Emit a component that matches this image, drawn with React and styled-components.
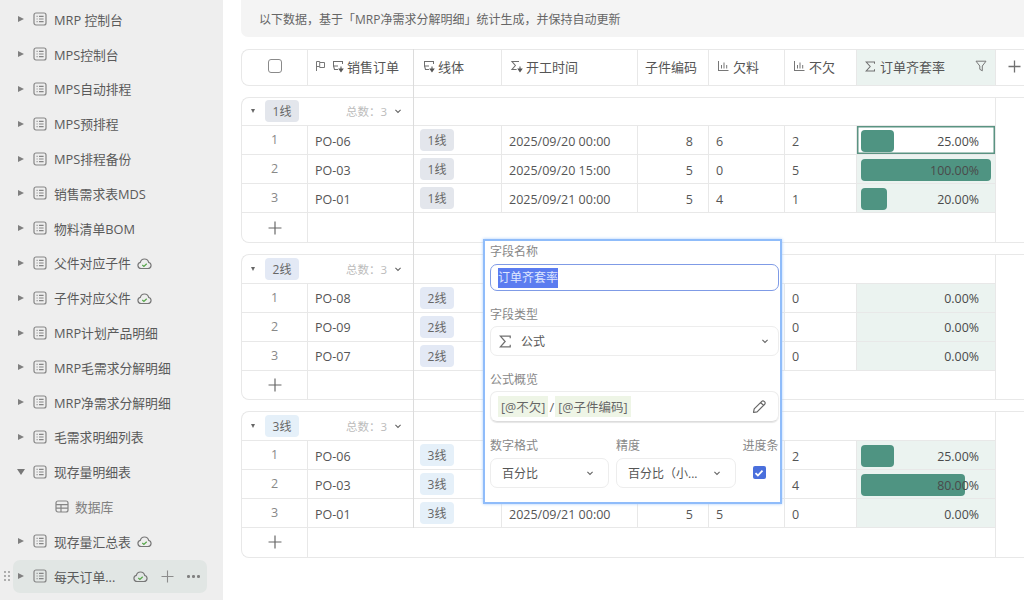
import styled, { createGlobalStyle } from "styled-components";

const COLUMNS = "66px 106px 88px 136px 71px 76px 72px 139px 29px";
const LINE = "#e8e8e8";

const NAV_ITEMS = [
  { name: "MRP 控制台" },
  { name: "MPS控制台" },
  { name: "MPS自动排程" },
  { name: "MPS预排程" },
  { name: "MPS排程备份" },
  { name: "销售需求表MDS" },
  { name: "物料清单BOM" },
  { name: "父件对应子件", cloud: true },
  { name: "子件对应父件", cloud: true },
  { name: "MRP计划产品明细" },
  { name: "MRP毛需求分解明细" },
  { name: "MRP净需求分解明细" },
  { name: "毛需求明细列表" },
  { name: "现存量明细表", open: true },
  { name: "数据库", child: true },
  { name: "现存量汇总表", cloud: true },
];

const GROUPS = [
  {
    label: "1线",
    tagBg: "#e3e6ec",
    rows: [
      { order: "PO-06", date: "2025/09/20 00:00", code: 8, short: 6, ok: 2, rate: 25, text: "25.00%", active: true },
      { order: "PO-03", date: "2025/09/20 15:00", code: 5, short: 0, ok: 5, rate: 100, text: "100.00%" },
      { order: "PO-01", date: "2025/09/21 00:00", code: 5, short: 4, ok: 1, rate: 20, text: "20.00%" },
    ],
  },
  {
    label: "2线",
    tagBg: "#e3e9f5",
    rows: [
      { order: "PO-08", ok: 0, rate: 0, text: "0.00%" },
      { order: "PO-09", ok: 0, rate: 0, text: "0.00%" },
      { order: "PO-07", ok: 0, rate: 0, text: "0.00%" },
    ],
  },
  {
    label: "3线",
    tagBg: "#e5f0f9",
    rows: [
      { order: "PO-06", ok: 2, rate: 25, text: "25.00%" },
      { order: "PO-03", ok: 4, rate: 80, text: "80.00%" },
      { order: "PO-01", date: "2025/09/21 00:00", code: 5, short: 5, ok: 0, rate: 0, text: "0.00%" },
    ],
  },
];

function DocIcon() {
  return (
    <svg width="14" height="14" viewBox="0 0 14 14" fill="none" stroke="#858585" strokeWidth="1.2">
      <rect x="1" y="1" width="12" height="12" rx="2" />
      <path d="M3.6 4.3h1M3.6 7h1M3.6 9.7h1M6 4.3h4.6M6 7h4.6M6 9.7h4.6" />
    </svg>
  );
}

function GridIcon() {
  return (
    <svg width="14" height="13" viewBox="0 0 14 13" fill="none" stroke="#858585" strokeWidth="1.2">
      <rect x="1" y="1" width="12" height="11" rx="2" />
      <path d="M1 4.6h12M1 8.2h12M6 4.6V12" />
    </svg>
  );
}

function CloudIcon() {
  return (
    <svg width="15" height="14" viewBox="0 0 15 14" fill="none">
      <path d="M4.2 12.5a3.1 3.1 0 0 1-.9-6.1 4.3 4.3 0 0 1 8.4 0 3.1 3.1 0 0 1-.9 6.1z" stroke="#777" strokeWidth="1.2" />
      <path d="M5.3 9l1.6 1.4 2.8-2.6" stroke="#55a548" strokeWidth="1.2" />
    </svg>
  );
}

function FlagIcon() {
  return (
    <svg width="11" height="12" viewBox="0 0 11 12" fill="none" stroke="#777" strokeWidth="1">
      <path d="M1.5 11V1.5h3.2v1h4.8v5H4.7v-1H1.5M4.7 2.5v4" />
    </svg>
  );
}

function LinkIcon() {
  return (
    <svg width="12" height="13" viewBox="0 0 12 13" fill="none" stroke="#6e6e6e" strokeWidth="1.05">
      <path d="M6 6H1.5V1.5h9v2.6M1.5 6l1 3.5h3.6" />
      <path d="M9 6.5v3.2M7.2 9h3.6L9 11.6z" fill="#555" stroke="#555" />
    </svg>
  );
}

function SigmaLinkIcon() {
  return (
    <svg width="12" height="13" viewBox="0 0 12 13" fill="none" stroke="#6e6e6e" strokeWidth="1.05">
      <path d="M8 1.5H1l3.4 4L1 9.5h4.6" />
      <path d="M9 6.5v3.2M7.2 9h3.6L9 11.6z" fill="#555" stroke="#555" />
    </svg>
  );
}

function SigmaIcon({ size = 11 }) {
  return (
    <svg width={size} height={size} viewBox="0 0 11 11" fill="none" stroke="#707070" strokeWidth="1.05">
      <path d="M9.5 2.8V1H1.2l4 4.5-4 4.5h8.3V8.2" />
    </svg>
  );
}

function BarsIcon() {
  return (
    <svg width="12" height="12" viewBox="0 0 12 12" fill="none" stroke="#777" strokeWidth="1">
      <path d="M1 10.5h10.5M1.5 1v9.5M4.5 5v3.5M7 2.5v6M9.7 5v3.5" />
    </svg>
  );
}

function FilterIcon() {
  return (
    <svg width="12" height="12" viewBox="0 0 12 12" fill="none" stroke="#777" strokeWidth="1">
      <path d="M1 1.2h10L7.3 6v4.8L4.8 9.3V6z" strokeLinejoin="round" />
    </svg>
  );
}

function PlusIcon({ size = 13, color = "#666", weight = 1.1 }) {
  return (
    <svg width={size} height={size} viewBox="0 0 13 13" fill="none" stroke={color} strokeWidth={weight}>
      <path d="M6.5 0.5v12M0.5 6.5h12" />
    </svg>
  );
}

function Chevron({ size = 8, color = "#666" }) {
  return (
    <svg width={size} height={size} viewBox="0 0 8 8" fill="none" stroke={color} strokeWidth="1.1">
      <path d="M1.4 2.8l2.6 2.6 2.6-2.6" />
    </svg>
  );
}

function PencilIcon() {
  return (
    <svg width="15" height="15" viewBox="0 0 15 15" fill="none" stroke="#666" strokeWidth="1.2" strokeLinejoin="round">
      <path d="M1.5 13.5l.7-3.6 7.6-7.6a1.6 1.6 0 0 1 2.3 0l.6.6a1.6 1.6 0 0 1 0 2.3l-7.6 7.6zM8.6 3.5l2.9 2.9" />
    </svg>
  );
}

function HandleIcon() {
  return (
    <svg width="6" height="10" viewBox="0 0 6 10" fill="#8c8c8c">
      <circle cx="1" cy="1" r="0.9" />
      <circle cx="5" cy="1" r="0.9" />
      <circle cx="1" cy="5" r="0.9" />
      <circle cx="5" cy="5" r="0.9" />
      <circle cx="1" cy="9" r="0.9" />
      <circle cx="5" cy="9" r="0.9" />
    </svg>
  );
}

function NavRow({ item }) {
  if (item.child) {
    return (
      <Row>
        <ChildSlot>
          <GridIcon />
        </ChildSlot>
        <ChildName>{item.name}</ChildName>
      </Row>
    );
  }
  return (
    <Row>
      <Caret $open={item.open} />
      <DocSlot>
        <DocIcon />
      </DocSlot>
      <RowName>{item.name}</RowName>
      {item.cloud && (
        <CloudSlot>
          <CloudIcon />
        </CloudSlot>
      )}
    </Row>
  );
}

function RateCell({ row }) {
  return (
    <RatePane $active={row.active}>
      {row.rate > 0 && <RateBar style={{ width: `${(row.rate / 100) * 130}px` }} />}
      <RateText>{row.text}</RateText>
    </RatePane>
  );
}

function Group({ group }) {
  return (
    <GroupBox>
      <GroupHead>
        <SmallCaret />
        <GroupTag $bg={group.tagBg}>{group.label}</GroupTag>
        <Total>总数：3</Total>
        <Chevron />
      </GroupHead>
      <BlankHead />
      <Gutter />
      {group.rows.map((row, i) => (
        <DataRow key={row.order}>
          <IndexCell>{i + 1}</IndexCell>
          <Cell>{row.order}</Cell>
          <TagCell>
            <LineTag $bg={group.tagBg}>{group.label}</LineTag>
          </TagCell>
          <Cell>{row.date}</Cell>
          <Cell $right>{row.code}</Cell>
          <Cell>{row.short}</Cell>
          <Cell>{row.ok}</Cell>
          <RateCell row={row} />
          <Gutter />
        </DataRow>
      ))}
      <AddCell>
        <PlusIcon size={14} />
      </AddCell>
      <Gutter />
      <AddRest />
      <Gutter />
    </GroupBox>
  );
}

export default function App() {
  return (
    <Page>
      <GlobalStyle />
      <Sidebar>
        {NAV_ITEMS.map((item) => (
          <NavRow key={item.name} item={item} />
        ))}
        <ActiveRow>
          <DragHandle>
            <HandleIcon />
          </DragHandle>
          <Caret />
          <DocSlot>
            <DocIcon />
          </DocSlot>
          <ActiveName>每天订单...</ActiveName>
          <RowActions>
            <CloudIcon />
            <PlusIcon color="#8c8c8c" />
            <MoreDots>
              <i />
              <i />
              <i />
            </MoreDots>
          </RowActions>
        </ActiveRow>
      </Sidebar>

      <Main>
        <Banner>以下数据，基于「MRP净需求分解明细」统计生成，并保持自动更新</Banner>
        <TableArea>
          <FrozenLine />
          <HeaderRow>
            <HeadCell $center>
              <CheckBox />
            </HeadCell>
            <HeadCell>
              <FlagIcon />
              <LinkGap>
                <LinkIcon />
              </LinkGap>
              销售订单
            </HeadCell>
            <HeadCell $pad={9}>
              <LinkIcon />
              线体
            </HeadCell>
            <HeadCell $pad={9}>
              <SigmaLinkIcon />
              开工时间
            </HeadCell>
            <HeadCell>子件编码</HeadCell>
            <HeadCell $pad={8} $gap={4}>
              <BarsIcon />
              欠料
            </HeadCell>
            <HeadCell $pad={8} $gap={4}>
              <BarsIcon />
              不欠
            </HeadCell>
            <RateHead>
              <SigmaIcon />
              <RateTitle>订单齐套率</RateTitle>
              <FilterIcon />
            </RateHead>
            <AddColumn>
              <PlusIcon weight={1.3} color="#707070" />
            </AddColumn>
          </HeaderRow>
          {GROUPS.map((group) => (
            <Group key={group.label} group={group} />
          ))}
        </TableArea>
      </Main>

      <FieldPopup>
        <FieldLabel>字段名称</FieldLabel>
        <NameInput>
          <Selected>订单齐套率</Selected>
        </NameInput>
        <FieldLabel $top={15}>字段类型</FieldLabel>
        <SelectBox>
          <SigmaIcon size={13} />
          <SelectText $left={9}>公式</SelectText>
          <Chevron size={8} />
        </SelectBox>
        <FieldLabel $top={15}>公式概览</FieldLabel>
        <FormulaBox>
          <FormulaTag>[@不欠]</FormulaTag>
          <Slash>/</Slash>
          <FormulaTag>[@子件编码]</FormulaTag>
          <PencilSlot>
            <PencilIcon />
          </PencilSlot>
        </FormulaBox>
        <FormatGrid>
          <div>
            <FieldLabel>数字格式</FieldLabel>
            <SelectBox $tight>
              <SelectText>百分比</SelectText>
              <Chevron size={8} />
            </SelectBox>
          </div>
          <div>
            <FieldLabel>精度</FieldLabel>
            <SelectBox $tight>
              <SelectText>百分比（小...</SelectText>
              <Chevron size={8} />
            </SelectBox>
          </div>
          <div>
            <FieldLabel>进度条</FieldLabel>
            <CheckSlot>
              <BlueCheck>
                <svg width="10" height="10" viewBox="0 0 10 10" fill="none" stroke="#fff" strokeWidth="1.8">
                  <path d="M1.5 5.2l2.4 2.3 4.6-4.8" />
                </svg>
              </BlueCheck>
            </CheckSlot>
          </div>
        </FormatGrid>
      </FieldPopup>
    </Page>
  );
}

const GlobalStyle = createGlobalStyle`
  html, body {
    margin: 0;
    padding: 0;
    height: 100%;
    overflow: hidden;
    background: #fff;
  }
  body {
    font-family: "Open Sans", "Noto Sans CJK SC", sans-serif;
    font-size: 13px;
    color: #555;
  }
`;

const Page = styled.div`
  position: relative;
  display: flex;
  width: 1024px;
  height: 600px;
  overflow: hidden;
`;

const Sidebar = styled.aside`
  width: 223px;
  flex-shrink: 0;
  box-sizing: border-box;
  padding: 2px 16px 0 13px;
  background: #eeeeee;
  font-size: 12.8px;
`;

const Row = styled.div`
  position: relative;
  display: flex;
  align-items: center;
  height: 34.8px;
  padding-left: 5px;
  color: #5a5a5a;
  white-space: nowrap;
`;

const ActiveRow = styled(Row)`
  height: 33px;
  margin-top: 1px;
  border-radius: 7px;
  background: #e1e6e4;
`;

const DragHandle = styled.span`
  position: absolute;
  left: -9px;
  top: 11px;
  display: flex;
`;

const Caret = styled.span`
  width: 0;
  height: 0;
  flex-shrink: 0;
  ${({ $open }) =>
    $open
      ? `
    margin: 0 -1px 0 -1px;
    border-left: 4px solid transparent;
    border-right: 4px solid transparent;
    border-top: 6px solid #777;
  `
      : `
    border-top: 3.5px solid transparent;
    border-bottom: 3.5px solid transparent;
    border-left: 6px solid #808080;
  `}
`;

const DocSlot = styled.span`
  display: flex;
  margin-left: 9px;
`;

const RowName = styled.span`
  margin-left: 7px;
`;

const ActiveName = styled(RowName)`
  width: 76px;
`;

const ChildSlot = styled.span`
  display: flex;
  margin-left: 37px;
`;

const ChildName = styled.span`
  margin-left: 6px;
  color: #808080;
`;

const CloudSlot = styled.span`
  display: flex;
  margin-left: 6px;
`;

const RowActions = styled.span`
  display: flex;
  align-items: center;
  gap: 13px;
  margin-left: 3px;
`;

const MoreDots = styled.span`
  display: flex;
  gap: 2.5px;
  i {
    width: 2.5px;
    height: 2.5px;
    border-radius: 50%;
    background: #808080;
  }
`;

const Main = styled.main`
  flex: 1;
  min-width: 0;
  padding-left: 18px;
`;

const Banner = styled.div`
  display: flex;
  align-items: center;
  height: 37px;
  padding-left: 18px;
  background: #f4f4f4;
  border-bottom-left-radius: 7px;
  font-size: 12px;
  color: #666;
`;

const TableArea = styled.div`
  position: relative;
  margin-top: 12px;
`;

const FrozenLine = styled.div`
  position: absolute;
  z-index: 2;
  left: 172px;
  top: 0;
  width: 1px;
  height: 479px;
  background: #dcdcdc;
`;

const HeaderRow = styled.div`
  display: grid;
  grid-template-columns: ${COLUMNS};
  height: 36.5px;
  box-sizing: border-box;
  border: 1px solid ${LINE};
  border-right: 0;
  border-radius: 8px 0 0 8px;
  overflow: hidden;
`;

const HeadCell = styled.div`
  display: flex;
  align-items: center;
  justify-content: ${({ $center }) => ($center ? "center" : "flex-start")};
  gap: ${({ $gap }) => $gap ?? 3}px;
  padding-left: ${({ $center, $pad }) => ($center ? 0 : $pad ?? 7)}px;
  padding-bottom: 2px;
  border-right: 1px solid ${LINE};
  color: #555;
  white-space: nowrap;
`;

const LinkGap = styled.span`
  display: flex;
  margin-left: 3px;
`;

const CheckBox = styled.span`
  width: 12px;
  height: 12px;
  border: 1px solid #8a8a8a;
  border-radius: 3px;
`;

const RateHead = styled.div`
  display: flex;
  align-items: center;
  padding: 0 8px 2px 8px;
  background: #ebf3f0;
  border-right: 1px solid ${LINE};
`;

const RateTitle = styled.span`
  flex: 1;
  margin-left: 4px;
`;

const AddColumn = styled.div`
  display: flex;
  align-items: center;
  justify-content: center;
  padding: 0 0 2px 7px;
`;

const GroupBox = styled.div`
  display: grid;
  grid-template-columns: ${COLUMNS};
  grid-auto-rows: 28.9px;
  margin-top: 11px;
  border: 1px solid ${LINE};
  border-right: 0;
  border-radius: 8px 0 0 8px;
  overflow: hidden;
`;

const GroupHead = styled.div`
  grid-column: span 2;
  display: flex;
  align-items: center;
  padding: 0 12px 0 9px;
  border-bottom: 1px solid ${LINE};
`;

const SmallCaret = styled.span`
  width: 0;
  height: 0;
  border-left: 2.5px solid transparent;
  border-right: 2.5px solid transparent;
  border-top: 4px solid #666;
`;

const GroupTag = styled.span`
  display: flex;
  align-items: center;
  justify-content: center;
  width: 34px;
  height: 22px;
  margin-left: 10px;
  border-radius: 4px;
  background: ${({ $bg }) => $bg};
  font-size: 12px;
  color: #666;
`;

const Total = styled.span`
  margin: 0 7px 0 auto;
  font-size: 11.5px;
  color: #bcbcbc;
`;

const BlankHead = styled.div`
  grid-column: span 6;
  border-bottom: 1px solid ${LINE};
  border-right: 1px solid ${LINE};
`;

const Gutter = styled.div``;

const DataRow = styled.div`
  display: contents;
`;

const Cell = styled.div`
  display: flex;
  align-items: center;
  justify-content: ${({ $right }) => ($right ? "flex-end" : "flex-start")};
  padding: ${({ $right }) => ($right ? "2px 15px 0 0" : "2px 0 0 7px")};
  box-sizing: border-box;
  border-right: 1px solid ${LINE};
  border-bottom: 1px solid ${LINE};
  font-size: 12.5px;
  white-space: nowrap;
  color: #555;
`;

const IndexCell = styled(Cell)`
  justify-content: center;
  padding: 0 0 1px;
  color: #888;
`;

const TagCell = styled(Cell)`
  padding: 0 0 0 6px;
`;

const LineTag = styled.span`
  display: flex;
  align-items: center;
  justify-content: center;
  width: 34px;
  height: 22px;
  border-radius: 4px;
  background: ${({ $bg }) => $bg};
  font-size: 12px;
  color: #666;
`;

const RatePane = styled.div`
  position: relative;
  display: flex;
  align-items: center;
  justify-content: flex-end;
  padding: 2px 16px 0 0;
  box-sizing: border-box;
  border-right: 1px solid ${LINE};
  border-bottom: 1px solid ${LINE};
  background: ${({ $active }) => ($active ? "#fff" : "#ebf3f0")};
  box-shadow: ${({ $active }) => ($active ? "inset 0 0 0 1.5px #5a9382" : "none")};
  font-size: 12.4px;
`;

const RateBar = styled.span`
  position: absolute;
  left: 4px;
  top: 3.5px;
  height: 22px;
  border-radius: 4px;
  background: #4f9482;
`;

const RateText = styled.span`
  position: relative;
  color: #4a4a4a;
`;

const AddCell = styled.div`
  display: flex;
  align-items: center;
  justify-content: center;
  border-right: 1px solid ${LINE};
`;

const AddRest = styled.div`
  grid-column: span 6;
  border-right: 1px solid ${LINE};
`;

const FieldPopup = styled.div`
  position: absolute;
  z-index: 5;
  left: 483px;
  top: 239px;
  width: 299px;
  height: 265px;
  box-sizing: border-box;
  padding: 2px 1px 0 5px;
  background: #fff;
  border: 2px solid #8fbcfa;
  box-shadow: 0 0 3px #a9ccfb;
`;

const FieldLabel = styled.div`
  height: 17px;
  margin-top: ${({ $top }) => $top ?? 0}px;
  font-size: 12px;
  line-height: 17px;
  color: #888;
  white-space: nowrap;
`;

const NameInput = styled.div`
  display: flex;
  align-items: center;
  height: 25px;
  margin-top: 4px;
  padding-left: 7px;
  border: 1px solid #7f9be6;
  border-radius: 7px;
`;

const Selected = styled.span`
  height: 20px;
  font-size: 12px;
  line-height: 20px;
  background: #5b7cf0;
  color: #dfe6ff;
`;

const SelectBox = styled.div`
  display: flex;
  align-items: center;
  justify-content: ${({ $tight }) => ($tight ? "space-between" : "flex-start")};
  height: 28px;
  margin-top: ${({ $tight }) => ($tight ? 4 : 3)}px;
  padding: ${({ $tight }) => ($tight ? "0 14px 0 11px" : "0 9px 0 8px")};
  border: 1px solid #ededed;
  border-radius: 7px;
  svg:last-child {
    margin-left: auto;
  }
`;

const SelectText = styled.span`
  margin-left: ${({ $left }) => $left ?? 0}px;
  font-size: 12px;
  white-space: nowrap;
`;

const FormulaBox = styled.div`
  display: flex;
  align-items: center;
  height: 29px;
  margin-top: 3px;
  padding-left: 7px;
  border: 1px solid #ededed;
  border-bottom-color: #dcdcdc;
  border-radius: 7px;
  box-shadow: 0 1px 1px #e6e6e6;
`;

const FormulaTag = styled.span`
  display: flex;
  align-items: center;
  height: 21px;
  padding: 0 3px;
  background: #eef5e6;
  color: #666;
  font-size: 12.5px;
  white-space: nowrap;
`;

const Slash = styled.span`
  margin: 0 1px;
  color: #666;
`;

const PencilSlot = styled.span`
  display: flex;
  margin-left: auto;
  margin-right: 11px;
`;

const FormatGrid = styled.div`
  display: grid;
  grid-template-columns: 119px 119.5px 37px;
  gap: 7px;
  margin-top: 15px;
`;

const CheckSlot = styled.div`
  display: flex;
  margin: 12px 0 0 10px;
`;

const BlueCheck = styled.span`
  display: flex;
  align-items: center;
  justify-content: center;
  width: 13px;
  height: 13px;
  border-radius: 2px;
  background: #4a6fdc;
`;
